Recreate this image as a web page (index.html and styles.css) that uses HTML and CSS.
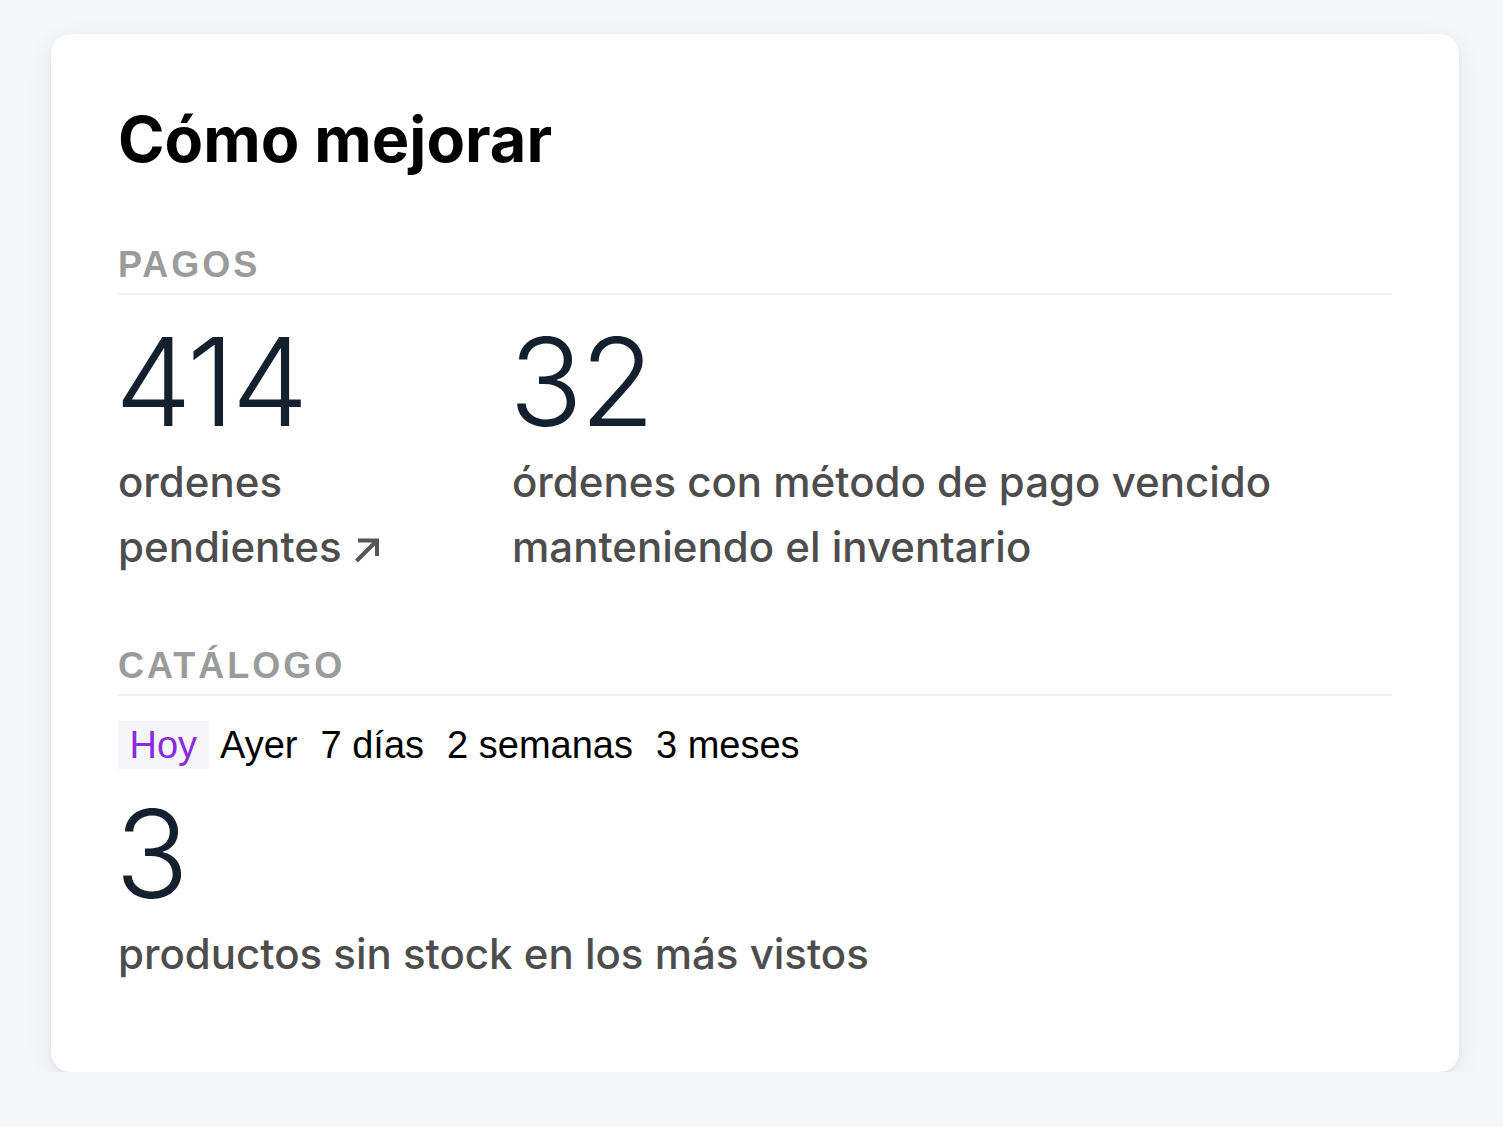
FILE: index.html
```html
<!DOCTYPE html>
<html lang="es">
<head>
<meta charset="utf-8">
<title>Cómo mejorar</title>
<link rel="stylesheet" href="styles.css">
</head>
<body>
<main class="card">
  <h1 class="title">Cómo mejorar</h1>

  <section class="section section-first">
    <h2 class="section-head">PAGOS</h2>
    <div class="stats">
      <div class="stat stat-narrow">
        <div class="stat-num">414</div>
        <div class="stat-label">ordenes pendientes<span class="arrow"><svg width="27" height="27" viewBox="0 0 27 27"><path d="M2.5 25 L22.5 5 M4 4.5 H23 V20" fill="none" stroke="#555" stroke-width="4"/></svg></span></div>
      </div>
      <div class="stat stat-wide">
        <div class="stat-num">32</div>
        <div class="stat-label">órdenes con método de pago vencido manteniendo el inventario</div>
      </div>
    </div>
  </section>

  <section class="section section-second">
    <h2 class="section-head">CATÁLOGO</h2>
    <div class="tabs">
      <button class="tab tab-active">Hoy</button>
      <button class="tab">Ayer</button>
      <button class="tab">7 días</button>
      <button class="tab">2 semanas</button>
      <button class="tab">3 meses</button>
    </div>
    <div class="stat stat-single">
      <div class="stat-num">3</div>
      <div class="stat-label">productos sin stock en los más vistos</div>
    </div>
  </section>
</main>
</body>
</html>
```

FILE: styles.css
```css
* { box-sizing: border-box; }
html, body { margin: 0; padding: 0; }
body {
  background: #f6f7f9;
  padding: 34px 44px 0 51px;
  font-family: "Inter", "Liberation Sans", sans-serif;
}
.card {
  background: #ffffff;
  border-radius: 20px;
  box-shadow: 0 2px 4px rgba(20, 30, 50, 0.04), 0 8px 26px rgba(20, 30, 50, 0.08);
  height: 1038px;
  padding: 69px 67px 0 67px;
}
.title {
  margin: 0;
  font-family: "Inter", "Liberation Sans", sans-serif;
  font-weight: 700;
  font-size: 63px;
  line-height: 72px;
  color: #000;
}
.section-first { margin-top: 70px; }
.section-second { margin-top: 66px; }
.section-head {
  margin: 0;
  font-family: "Liberation Sans", sans-serif;
  font-weight: 700;
  font-size: 36px;
  line-height: 40px;
  letter-spacing: 3px;
  color: #9b9b9b;
  padding-bottom: 8px;
  border-bottom: 2px solid #f0f1f3;
}
.stats { display: flex; gap: 94px; margin-top: 19px; }
.stat-narrow { width: 300px; }
.stat-wide { width: 800px; }
.stat-single { margin-top: 17px; }
.stat-num {
  font-family: "Inter", sans-serif;
  font-weight: 300;
  font-size: 122px;
  line-height: 135px;
  color: #15202f;
  letter-spacing: -3px;
  margin-left: -3px;
}
.stat-label {
  font-family: "Inter", sans-serif;
  font-weight: 500;
  font-size: 42px;
  line-height: 65px;
  color: #4d4d4d;
}
.arrow { display: inline-block; margin-left: 12px; vertical-align: -1px; }
.tabs { display: flex; margin-top: 25px; }
.tab {
  font-family: "Liberation Sans", sans-serif;
  font-size: 38px;
  line-height: 48px;
  padding: 0 11.5px;
  border: 0;
  background: transparent;
  color: #000;
}
.tab-active { background: #f6f6f8; color: #8a2be2; }
```
